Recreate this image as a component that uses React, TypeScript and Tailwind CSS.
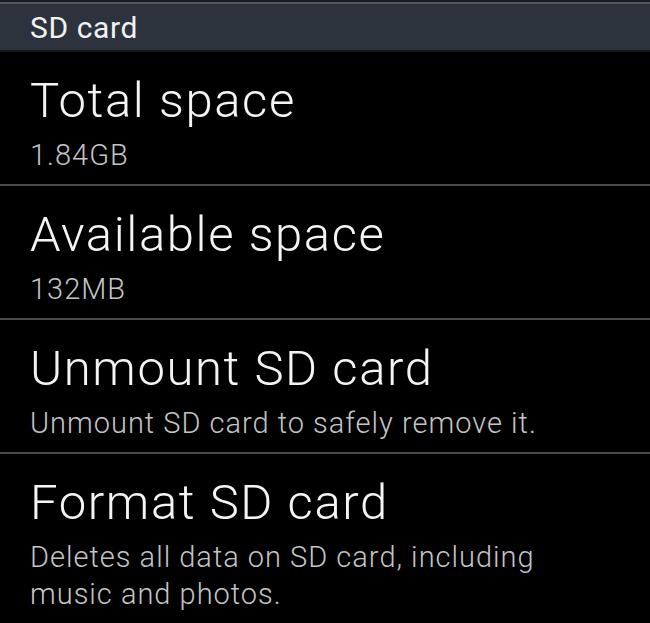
import React from "react";

type Item = { title: string; summary: string };

const items: Item[] = [
  { title: "Total space", summary: "1.84GB" },
  { title: "Available space", summary: "132MB" },
  { title: "Unmount SD card", summary: "Unmount SD card to safely remove it." },
  {
    title: "Format SD card",
    summary: "Deletes all data on SD card, including music and photos.",
  },
];

function SettingRow({ item, last }: { item: Item; last: boolean }) {
  return (
    <div
      className={`flex flex-col pl-[30px] pr-[30px] pt-[21px] h-[134px] ${
        last ? "" : "border-b-2 border-[#4a4a4a]"
      }`}
    >
      <div className="text-[49px] leading-[56px] font-light tracking-[1.6px] text-[#f4f4f4]">
        {item.title}
      </div>
      <div className="mt-[8px] text-[29px] leading-[37px] font-light tracking-[1px] text-[#c4c4c4] max-w-[540px]">
        {item.summary}
      </div>
    </div>
  );
}

export default function App() {
  return (
    <div
      className="w-[650px] h-[623px] bg-black overflow-hidden"
      style={{ fontFamily: "Roboto, 'Noto Sans', sans-serif" }}
    >
      <div className="h-[2px] bg-[#16191d]" />
      <div className="h-[2px] bg-[#525860]" />
      <div className="h-[46px] bg-[#2c333d] flex items-center pl-[30px]">
        <span className="text-[30px] leading-none tracking-[0.6px] text-[#f2f2f2] pt-[2px]">
          SD card
        </span>
      </div>
      <div className="h-[2px] bg-[#14171b]" />
      {items.map((it, i) => (
        <SettingRow key={it.title} item={it} last={i === items.length - 1} />
      ))}
    </div>
  );
}
